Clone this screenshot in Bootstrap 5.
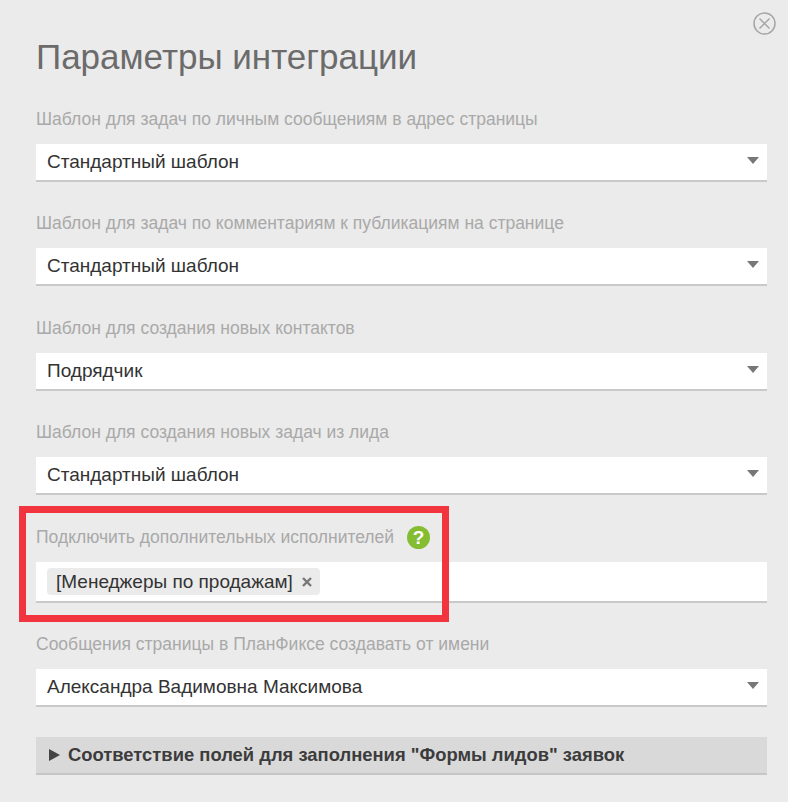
<!DOCTYPE html>
<html lang="ru">
<head>
  <meta charset="UTF-8"/>
  <meta name="viewport" content="width=device-width, initial-scale=1.0"/>
  <title>Параметры интеграции</title>
  <link href="https://cdn.jsdelivr.net/npm/bootstrap@5.3.0/dist/css/bootstrap.min.css" rel="stylesheet"/>
  <style>
    html, body { height: 802px; overflow: hidden; }
    body {
      background: #ebebeb;
      font-family: "Liberation Sans", Arial, sans-serif;
      color: #333;
    }
    .panel { position: relative; height: 802px; padding: 37px 21px 0 36px; }
    .panel-close { position: absolute; top: 12px; right: 12px; width: 23px; height: 23px; padding: 0; border: 0; background: none; line-height: 0; }
    .panel-title { font-size: 35px; line-height: 39px; font-weight: 400; color: #6b6b6b; margin: 0 0 32px; }
    .field-label { display: block; font-size: 17.5px; line-height: 22px; color: #a9a9a9; margin: 0 0 14px; }
    .field { margin-bottom: 30.33px; }
    .field-tagged { margin-bottom: 29.67px; }
    .field-tagged .field-label { padding-top: 1px; }
    .field-select {
      height: 38px;
      font-size: 19px;
      line-height: 24px;
      color: #333;
      padding: 0 30px 0 11px;
      border: 0;
      border-bottom: 2px solid #c9c9c9;
      border-radius: 0;
      background-color: #fff;
      background-image: url("data:image/svg+xml,%3Csvg xmlns='http://www.w3.org/2000/svg' width='12' height='7'%3E%3Cpath d='M0 0h12L6 7z' fill='%23777'/%3E%3C/svg%3E");
      background-size: 12px 7px;
      background-position: right 8px top 13px;
    }
    .field-tags { height: 41px; padding: 6px 11px 0; background: #fff; border-bottom: 2px solid #c9c9c9; }
    .tag-chip { height: 27px; padding: 0 8px 0 9px; gap: 9px; background: #ebebeb; border-radius: 4px; font-size: 19px; color: #333; }
    .tag-x { line-height: 0; }
    .help-dot { width: 23px; height: 23px; background: #84bd32; color: #fff; font-weight: 700; font-size: 19px; line-height: 23px; text-align: center; border-radius: 50%; margin: -1px 0 -1px 13px; }
    .section-bar { height: 38px; padding: 0 0 0 13px; gap: 8px; background: #d9d9d9; border-bottom: 2px solid #c6c6c6; font-size: 18.4px; font-weight: 700; color: #3c3c3c; }
    .section-arrow { width: 0; height: 0; border-left: 11px solid #444; border-top: 6px solid transparent; border-bottom: 6px solid transparent; }
    .red-frame { position: absolute; left: 19px; top: 506px; width: 430px; height: 116px; border: 7px solid #f2343f; pointer-events: none; }
  </style>
</head>
<body>
  <div class="panel">
    <button type="button" class="panel-close" aria-label="Закрыть">
      <svg width="23" height="23" viewBox="0 0 23 23" fill="none" stroke="#a6a6a6">
        <circle cx="11.5" cy="11.5" r="10.5" stroke-width="1.5"/>
        <path d="M6.5 6.5l10 10M16.5 6.5l-10 10" stroke-width="1.5"/>
      </svg>
    </button>

    <h1 class="panel-title">Параметры интеграции</h1>

    <div class="field">
      <label class="field-label">Шаблон для задач по личным сообщениям в адрес страницы</label>
      <select class="form-select field-select"><option>Стандартный шаблон</option></select>
    </div>
    <div class="field">
      <label class="field-label">Шаблон для задач по комментариям к публикациям на странице</label>
      <select class="form-select field-select"><option>Стандартный шаблон</option></select>
    </div>
    <div class="field">
      <label class="field-label">Шаблон для создания новых контактов</label>
      <select class="form-select field-select"><option>Подрядчик</option></select>
    </div>
    <div class="field">
      <label class="field-label">Шаблон для создания новых задач из лида</label>
      <select class="form-select field-select"><option>Стандартный шаблон</option></select>
    </div>

    <div class="field field-tagged">
      <div class="d-flex align-items-center field-label">
        <span>Подключить дополнительных исполнителей</span>
        <span class="help-dot">?</span>
      </div>
      <div class="field-tags">
        <span class="tag-chip d-inline-flex align-items-center">[Менеджеры по продажам]
          <span class="tag-x">
            <svg width="10" height="10" viewBox="0 0 10 10" stroke="#777" stroke-width="2.4"><path d="M1 1l8 8M9 1l-8 8"/></svg>
          </span>
        </span>
      </div>
    </div>

    <div class="field">
      <label class="field-label">Сообщения страницы в ПланФиксе создавать от имени</label>
      <select class="form-select field-select"><option>Александра Вадимовна Максимова</option></select>
    </div>

    <div class="section-bar d-flex align-items-center">
      <span class="section-arrow"></span>
      <span>Соответствие полей для заполнения "Формы лидов" заявок</span>
    </div>

    <div class="red-frame"></div>
  </div>
  <script src="https://cdn.jsdelivr.net/npm/bootstrap@5.3.0/dist/js/bootstrap.bundle.min.js"></script>
</body>
</html>
